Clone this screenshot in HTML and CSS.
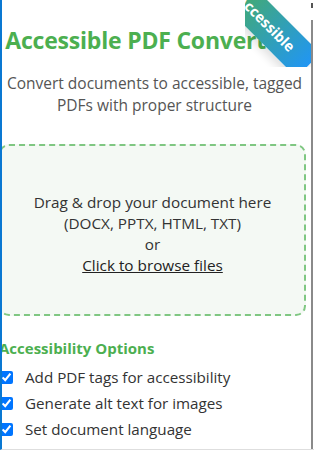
FILE: index.html
```html
<!DOCTYPE html>
<html lang="en">

<head>
    <meta charset="UTF-8" />
    <meta name="viewport" content="width=device-width, initial-scale=1.0" />
    <title>Accessible PDF Converter</title>
    <link rel="stylesheet" href="styles.css">
</head>

<body>
    <div class="frame">
        <div class="ribbon"><span>Accessible</span></div>

        <main class="app">
            <h1>Accessible PDF Converter</h1>
            <p class="subtitle">Convert documents to accessible, tagged PDFs with proper structure</p>

            <div class="dropzone">
                <p>
                    Drag &amp; drop your document here<br>
                    (DOCX, PPTX, HTML, TXT)<br>
                    or<br>
                    <span class="browse">Click to browse files</span>
                </p>
            </div>

            <section class="options">
                <h3>Accessibility Options</h3>
                <label class="option"><input type="checkbox" checked> Add PDF tags for accessibility</label>
                <label class="option"><input type="checkbox" checked> Generate alt text for images</label>
                <label class="option"><input type="checkbox" checked> Set document language</label>
            </section>
        </main>

        <div class="scrollbar"></div>
    </div>
</body>

</html>
```

FILE: styles.css
```css
body {
    margin: 0;
    padding: 0;
    background: #fff;
    font-family: "Open Sans", Arial, sans-serif;
}

.frame {
    position: relative;
    height: 450px;
    overflow: hidden;
    border-left: 2px solid #0a78d2;
    border-bottom: 1px solid #dedede;
    box-sizing: border-box;
}

.app {
    margin-left: -3px;
    width: 311px;
    text-align: center;
}

h1 {
    margin: 26px 0 0;
    padding-right: 14px;
    font-size: 23px;
    line-height: 29px;
    letter-spacing: -0.2px;
    font-weight: 700;
    color: #4caf50;
    white-space: nowrap;
}

.subtitle {
    margin: 17px 0 0;
    font-size: 15.5px;
    line-height: 22px;
    color: #555;
}

.dropzone {
    margin: 28px 4px 0 0;
    padding: 46px 0 38px;
    border: 2px dashed #7fc782;
    border-radius: 10px;
    background: #f4f9f4;
}

.dropzone p {
    margin: 0;
    font-size: 15.3px;
    line-height: 21px;
    color: #333;
}

.browse {
    text-decoration: underline;
    color: #222;
}

.options {
    margin-top: 22px;
    text-align: left;
}

.options h3 {
    margin: 0 0 6px;
    font-size: 15px;
    line-height: 20px;
    color: #4caf50;
}

.option {
    display: flex;
    align-items: center;
    gap: 12px;
    height: 26px;
    font-size: 15.2px;
    color: #333;
}

.option input {
    margin: 0 0 0 1px;
    width: 13px;
    height: 13px;
}

/* ribbon in the top right corner */
.ribbon {
    position: absolute;
    top: 0;
    right: 3px;
    width: 66px;
    height: 67px;
    overflow: hidden;
    z-index: 2;
}

.ribbon span {
    position: absolute;
    left: -39px;
    top: 6px;
    width: 120px;
    height: 34px;
    line-height: 34px;
    text-align: center;
    transform: rotate(45deg);
    background: linear-gradient(90deg, #4caf50, #2196f3);
    box-shadow: 0 5px 10px rgba(0, 0, 0, 0.12);
    color: #fff;
    font-size: 14.5px;
    font-weight: 700;
}

.scrollbar {
    position: absolute;
    top: 20px;
    bottom: 0;
    right: 1px;
    width: 2px;
    background: #8a8a8a;
}

.scrollbar::before {
    content: "";
    position: absolute;
    top: -17px;
    left: 0;
    width: 2px;
    height: 5px;
    background: #555;
}
```
